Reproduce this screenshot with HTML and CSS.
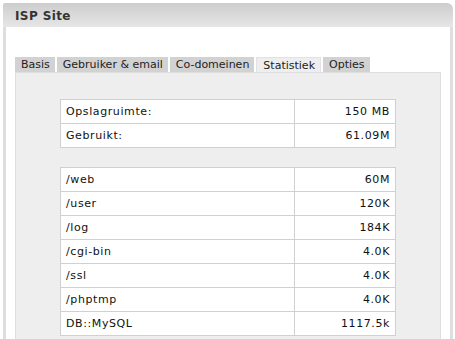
FILE: index.html
```html
<!DOCTYPE html>
<html>
<head>
    <meta charset="UTF-8">
    <link rel="stylesheet" href="styles.css">
</head>
<body>
    <div class="box">
        <div class="box-header">ISP Site</div>
        <div class="box-body">
            <div class="tabs">
                <span class="tab">Basis</span>
                <span class="tab">Gebruiker &amp; email</span>
                <span class="tab">Co-domeinen</span>
                <span class="tab active">Statistiek</span>
                <span class="tab">Opties</span>
            </div>
            <div class="tab-panel">
                <table class="stats">
                    <tr><td>Opslagruimte:</td><td class="num">150 MB</td></tr>
                    <tr><td>Gebruikt:</td><td class="num">61.09M</td></tr>
                </table>

                <table class="stats">
                    <tr><td>/web</td><td class="num">60M</td></tr>
                    <tr><td>/user</td><td class="num">120K</td></tr>
                    <tr><td>/log</td><td class="num">184K</td></tr>
                    <tr><td>/cgi-bin</td><td class="num">4.0K</td></tr>
                    <tr><td>/ssl</td><td class="num">4.0K</td></tr>
                    <tr><td>/phptmp</td><td class="num">4.0K</td></tr>
                    <tr><td>DB::MySQL</td><td class="num">1117.5k</td></tr>
                </table>
            </div>
        </div>
    </div>
</body>
</html>
```

FILE: styles.css
```css
body {
    margin: 0;
    padding: 3px;
    background: #fff;
    font-family: "DejaVu Sans", Verdana, sans-serif;
    font-size: 11px;
    color: #222;
}

.box {
    width: 450px;
}

.box-header {
    height: 24px;
    padding-left: 12px;
    line-height: 26px;
    font-size: 12px;
    font-weight: bold;
    letter-spacing: 0.4px;
    color: #333;
    background: linear-gradient(#cdcdcd, #e6e6e6);
    border-top-right-radius: 6px;
    border-top-left-radius: 2px;
}

.box-body {
    border-left: 3px solid #dedede;
    border-right: 3px solid #dedede;
    padding: 30px 9px 0 9px;
}

.tabs {
    display: flex;
    gap: 2px;
    height: 15px;
}

.tab {
    padding: 0 5px 0 6px;
    line-height: 16px;
    background: #d2d2d2;
    color: #222;
}

.tab.active {
    background: #eeeeee;
    border: 1px solid #e2e2e2;
    border-bottom: none;
    line-height: 15px;
}

.tab-panel {
    background: #eeeeee;
    border: 1px solid #dedede;
    border-bottom: none;
    padding: 26px 0 4px 0;
}

.stats {
    width: 336px;
    margin: 0 auto 19px auto;
    border-collapse: collapse;
    background: #fff;
}

.stats td {
    height: 23px;
    padding: 0 5px;
    border: 1px solid #d0d0d0;
    letter-spacing: 0.6px;
    color: #111;
    white-space: nowrap;
}

.stats .num {
    width: 90px;
    text-align: right;
}
```
